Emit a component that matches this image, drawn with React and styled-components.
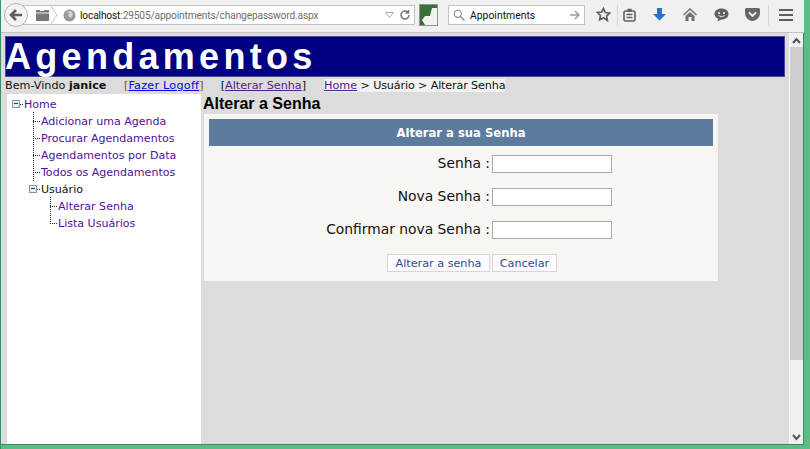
import React from "react";
import styled, { createGlobalStyle } from "styled-components";

const Global = createGlobalStyle`
  html, body { margin: 0; padding: 0; height: 449px; overflow: hidden; background: #5dbd8a; }
  #root { height: 449px; }
  * { box-sizing: border-box; }
`;

const Win = styled.div`
  width: 810px; height: 449px; display: flex; flex-direction: column;
  padding: 0 6px 4px 0; border-left: 1px solid #3a8f68; background: #5cbc88;
  font-family: "DejaVu Sans", Verdana, sans-serif;
`;
const Toolbar = styled.div`
  height: 33px; flex: none; display: flex; align-items: center;
  background: #f0f0f0; border-bottom: 1px solid #c4c4c4; padding-left: 3px;
`;
const Back = styled.div`
  width: 24px; height: 24px; border-radius: 50%; background: #f4f4f4; border: 1px solid #b4b4b4;
  display: flex; align-items: center; justify-content: center; flex: none;
  position: relative; z-index: 1; margin-top: -2px;
`;
const Url = styled.div`
  width: 393px; height: 20px; margin-left: -6px; margin-top: -2px; background: #fff; border: 1px solid #bcc4cc; border-left: none;
  display: flex; align-items: center; font: 10.2px "Roboto", sans-serif; letter-spacing: -0.15px; color: #6d6d6d; padding-left: 14px; flex: none;
`;
const Calendar = styled.svg` width: 13px; height: 12px; flex: none; margin-right: 2px; `;
const Chevron = styled.svg` width: 7px; height: 20px; flex: none; `;
const Globe = styled.svg` width: 13px; height: 13px; flex: none; margin-left: 5px; `;
const Host = styled.span` color: #111; `;
const UrlText = styled.span` flex: 1; margin-left: 4px; white-space: nowrap; `;
const Drop = styled.svg` width: 9px; height: 6px; flex: none; margin-right: 5px; `;
const Reload = styled.svg` width: 12px; height: 12px; flex: none; margin-right: 3px; `;
const Thumb = styled.div`
  width: 19px; height: 22px; margin-left: 4px; margin-top: -2px; flex: none; background: #3c6e3a;
  border: 1px solid #8a9a8a;
`;
const ThumbArt = styled.svg` width: 17px; height: 20px; display: block; `;
const Search = styled.div`
  width: 137px; height: 20px; margin-left: 10px; margin-top: -2px; flex: none; background: #fff; border: 1px solid #bcc4cc;
  display: flex; align-items: center; padding: 0 4px; font: 10.4px "Roboto", sans-serif; color: #111; gap: 5px;
`;
const SearchGlass = styled.svg` width: 12px; height: 12px; flex: none; `;
const SearchGo = styled.svg` width: 10px; height: 10px; flex: none; `;
const SearchText = styled.span` flex: 1; `;
const Icons = styled.div`
  display: flex; align-items: center; margin-left: 5px; margin-top: -3px; flex: 1;
`;
const IconSlot = styled.div`
  width: ${p => p.$w}px; height: 20px; display: flex; align-items: center; justify-content: center; flex: none;
  border-right: ${p => p.$sep ? "1px solid #d6d6d6" : "none"};
`;

const Content = styled.div`
  flex: 1; display: flex; min-height: 0; border-bottom: 1px solid #358f63; border-right: 1px solid #358f63;
`;
const Page = styled.div`
  flex: 1; background: #dcdcdc; display: flex; flex-direction: column; padding: 3px 3px 0 4px; min-width: 0; min-height: 0;
`;
const Banner = styled.div`
  height: 41px; flex: none; background: #000080; border: 1px solid #4a4aa0; color: #fff;
  font: bold 36px "Liberation Sans", Arial, sans-serif; letter-spacing: 4.3px; line-height: 40px; text-indent: -1px;
  white-space: nowrap; margin-right: 1px;
`;
const Nav = styled.div`
  height: 17px; flex: none; display: flex; align-items: center; font-size: 11.2px; color: #111; white-space: nowrap;
`;
const Welcome = styled.span` width: 119px; flex: none; `;
const Bracket = styled.span` color: ${p => p.$c || "#111"}; margin-right: ${p => p.$mr || 0}px; `;
const Link = styled.a`
  color: ${p => p.$visited ? "#551a8b" : "#0000ee"}; text-decoration: underline;
  letter-spacing: ${p => p.$ls || 0}px;
`;
const Crumb = styled.span` background: #f2f2f2; letter-spacing: -0.15px; `;
const Main = styled.div` flex: 1; display: flex; min-height: 0; `;
const Side = styled.div`
  width: 194px; flex: none; margin-left: 2px; background: #fff; padding: 2px 0 0 5px;
  font-size: 11.05px; color: #52109a;
`;
const Tree = styled.div` display: flex; flex-direction: column; `;
const TreeRow = styled.div`
  height: 17px; display: flex; align-items: center; white-space: nowrap; padding-left: ${p => 12 + p.$depth * 17}px;
`;
const TreeRoot = styled.div`
  height: 17px; display: flex; align-items: center; white-space: nowrap; padding-left: ${p => p.$indent || 0}px;
`;
const TreeChildren = styled.div`
  display: flex; flex-direction: column; position: relative;
  &::before {
    content: ""; position: absolute; left: ${p => p.$depth * 17 + 4}px; top: -1px; bottom: ${p => p.$last ? 8 : 0}px;
    border-left: 1px dotted #222;
  }
`;
const Dash = styled.span`
  width: 7px; flex: none; margin-left: -8px; margin-right: 1px; border-top: 1px dotted #222; height: 0;
`;
const Toggle = styled.span`
  width: 8px; height: 8px; flex: none; border: 1px solid #7b9ab8; background: #e6eef6; margin-top: -2px;
  display: flex; align-items: center; justify-content: center;
  &::after { content: ""; width: 4px; height: 1px; background: #1a3a5a; }
`;
const ToggleDash = styled.span` width: 3px; flex: none; border-top: 1px dotted #222; height: 0; margin-right: 1px; `;
const Plain = styled.span` color: #111; `;

const Body = styled.div` flex: 1; display: flex; flex-direction: column; padding-left: 2px; min-width: 0; `;
const Heading = styled.div`
  height: 20px; flex: none; font: bold 16px/20px "Liberation Sans", Arial, sans-serif; color: #000;
`;
const Panel = styled.div`
  width: 514px; margin-left: 1px; height: 167px; background: #f7f6f3; padding: 5px; flex: none;
  display: flex; flex-direction: column;
`;
const PanelHead = styled.div`
  height: 27px; flex: none; background: #5d7b9d; color: #fff; font-size: 11.6px; font-weight: bold;
  display: flex; align-items: center; justify-content: center;
`;
const FormRows = styled.div` display: flex; flex-direction: column; gap: 13px; margin-top: 8px; `;
const FormRow = styled.div` height: 20px; display: flex; align-items: center; `;
const Label = styled.label`
  width: 283px; flex: none; text-align: right; font-size: 13.85px; color: #111; white-space: nowrap; padding-right: 2px;
  margin-top: -2px;
`;
const Field = styled.input`
  width: 120px; height: 18px; margin: 0; border: 1px solid #a9a9b0; background: #fff; padding: 0; display: block; border-radius: 0; outline: none;
`;
const Buttons = styled.div` display: flex; gap: 2px; padding-left: 178px; margin-top: 14px; `;
const Btn = styled.button`
  height: 18px; padding: 0; width: ${p => p.$w}px; background: #fffbff; border: 1px solid #d6d4dc; color: #284e98;
  font: 11.2px "DejaVu Sans", Verdana, sans-serif; border-radius: 0;
`;
const Scrollbar = styled.div`
  width: 14px; flex: none; background: #f0f0f0; display: flex; flex-direction: column; border-left: 1px solid #f8f8f8;
`;
const Arrow = styled.div` height: 14px; display: flex; align-items: center; justify-content: center; flex: none; `;
const ThumbBar = styled.div` height: 313px; flex: none; background: #cdcdcd; `;
const Spacer = styled.div` flex: 1; `;

export default function App() {
  return (
    <Win>
      <Global />
      <Toolbar>
        <Back>
          <svg width="14" height="12" viewBox="0 0 14 12"><path d="M7 1 2 6l5 5M2.500 6H13" fill="none" stroke="#5e5e5e" strokeWidth="2.600" /></svg>
        </Back>
        <Url>
          <Calendar viewBox="0 0 13 12"><path d="M0 1h4v1h4V1h5v11H0z" fill="#777" /><path d="M0 4h13" stroke="#eee" /></Calendar>
          <Chevron viewBox="0 0 7 20"><path d="M0 1l6 9-6 9" fill="none" stroke="#c0c4c8" /></Chevron>
          <Globe viewBox="0 0 13 13"><circle cx="6.500" cy="6.500" r="6" fill="#9a9a9a" /><path d="M3 3l3 1-1 3 3 2 2-4-2-3z" fill="#d4d4d4" /></Globe>
          <UrlText><Host>localhost</Host>:29505/appointments/changepassword.aspx</UrlText>
          <Drop viewBox="0 0 9 6"><path d="M.5.5h8L4.500 5.500z" fill="none" stroke="#aaa" /></Drop>
          <Reload viewBox="0 0 12 12"><path d="M10 6a4 4 0 1 1-1.200-2.800M9.500 1v3h-3" fill="none" stroke="#777" strokeWidth="1.500" /></Reload>
        </Url>
        <Thumb>
          <ThumbArt viewBox="0 0 17 20"><path d="M17 3h-5l-2 8H5l-3 4 3 5h12z" fill="#f2f2f2" /></ThumbArt>
        </Thumb>
        <Search>
          <SearchGlass viewBox="0 0 12 12"><circle cx="4.800" cy="4.800" r="3.600" fill="none" stroke="#888" strokeWidth="1.100" /><path d="M7.500 7.500l4 4" stroke="#888" strokeWidth="1.400" /></SearchGlass>
          <SearchText>Appointments</SearchText>
          <SearchGo viewBox="0 0 10 10"><path d="M5 1l4 4-4 4M9 5H0" fill="none" stroke="#999" strokeWidth="1.400" /></SearchGo>
        </Search>
        <Icons>
          <IconSlot $w={28} $sep>
            <svg width="15" height="15" viewBox="0 0 24 24"><path d="M12 2.500l3 6.300 6.900.9-5 4.800 1.200 6.900L12 17.200l-6.100 3.300 1.200-6.900-5-4.800 6.900-.9z" fill="none" stroke="#5a5a5a" strokeWidth="2.600" /></svg>
          </IconSlot>
          <IconSlot $w={23}>
            <svg width="13" height="14" viewBox="0 0 13 14"><rect x="1" y="3" width="11" height="10" rx="1.500" fill="none" stroke="#5f5f5f" strokeWidth="1.600" /><path d="M5 1.500h3V3H5zM3.500 6.500h6M3.500 9.500h6" stroke="#5f5f5f" strokeWidth="1.300" fill="none" /></svg>
          </IconSlot>
          <IconSlot $w={36}>
            <svg width="13" height="13" viewBox="0 0 13 13"><path d="M4 0h5v6h4l-6.500 6.500L0 6h4z" fill="#1a78d8" /></svg>
          </IconSlot>
          <IconSlot $w={26}>
            <svg width="14" height="13" viewBox="0 0 14 13"><path d="M7 0l7 6.500-1 1L7 2 1 7.500l-1-1zM2.500 8L7 4l4.500 4v5H8.500V9h-3v4h-3z" fill="#707070" /></svg>
          </IconSlot>
          <IconSlot $w={36}>
            <svg width="15" height="14" viewBox="0 0 15 14"><path d="M7.500 0.500c4 0 7 2.300 7 5.500s-3 5.500-7 5.500l-4 2 .8-2.700C2 9.800.5 8 .5 6c0-3.200 3-5.500 7-5.500z" fill="#5f5f5f" /><circle cx="5" cy="5" r="1.100" fill="#f0f0f0" /><circle cx="10" cy="5" r="1.100" fill="#f0f0f0" /><path d="M4.500 7.500c1.500 1.300 4.500 1.300 6 0" stroke="#f0f0f0" fill="none" /></svg>
          </IconSlot>
          <IconSlot $w={26}>
            <svg width="15" height="13" viewBox="0 0 15 13"><path d="M1.500 0h12A1.500 1.500 0 0 1 15 1.500V5c0 4-3.500 8-7.500 8S0 9 0 5V1.500A1.500 1.500 0 0 1 1.500 0z" fill="#666" /><path d="M4 4.500l3.500 3.500L11 4.500" fill="none" stroke="#f0f0f0" strokeWidth="1.800" /></svg>
          </IconSlot>
          <IconSlot $w={4} $sep />
          <IconSlot $w={34}>
            <svg width="14" height="12" viewBox="0 0 14 12"><path d="M0 1h14M0 6h14M0 11h14" stroke="#5c5c5c" strokeWidth="2" /></svg>
          </IconSlot>
        </Icons>
      </Toolbar>
      <Content>
        <Page>
          <Banner>Agendamentos</Banner>
          <Nav>
            <Welcome>Bem-Vindo <b>janice</b></Welcome>
            <Bracket $c="#8a5a00">[</Bracket><Link href="#" $ls={0.25}>Fazer Logoff</Link><Bracket $c="#8a5a00" $mr={17}>]</Bracket>
            <Bracket>[</Bracket><Link href="#" $visited>Alterar Senha</Link><Bracket $mr={18}>]</Bracket>
            <Crumb><Link href="#" $visited>Home</Link> &gt; Usuário &gt; Alterar Senha</Crumb>
          </Nav>
          <Main>
            <Side>
              <Tree>
                <TreeRoot><Toggle /><ToggleDash />Home</TreeRoot>
                <TreeChildren $depth={1}>
                  <TreeRow $depth={1}><Dash />Adicionar uma Agenda</TreeRow>
                  <TreeRow $depth={1}><Dash />Procurar Agendamentos</TreeRow>
                  <TreeRow $depth={1}><Dash />Agendamentos por Data</TreeRow>
                  <TreeRow $depth={1}><Dash />Todos os Agendamentos</TreeRow>
                </TreeChildren>
                <TreeRoot $indent={17}><Toggle /><ToggleDash /><Plain>Usuário</Plain></TreeRoot>
                <TreeChildren $depth={2} $last>
                  <TreeRow $depth={2}><Dash />Alterar Senha</TreeRow>
                  <TreeRow $depth={2}><Dash />Lista Usuários</TreeRow>
                </TreeChildren>
              </Tree>
            </Side>
            <Body>
              <Heading>Alterar a Senha</Heading>
              <Panel>
                <PanelHead>Alterar a sua Senha</PanelHead>
                <FormRows>
                  <FormRow><Label>Senha :</Label><Field type="password" /></FormRow>
                  <FormRow><Label>Nova Senha :</Label><Field type="password" /></FormRow>
                  <FormRow><Label>Confirmar nova Senha :</Label><Field type="password" /></FormRow>
                </FormRows>
                <Buttons>
                  <Btn $w={103}>Alterar a senha</Btn>
                  <Btn $w={65}>Cancelar</Btn>
                </Buttons>
              </Panel>
            </Body>
          </Main>
        </Page>
        <Scrollbar>
          <Arrow><svg width="9" height="7" viewBox="0 0 9 7"><path d="M1 6l3.500-4L8 6" fill="none" stroke="#555" strokeWidth="2" /></svg></Arrow>
          <ThumbBar />
          <Spacer />
          <Arrow><svg width="9" height="7" viewBox="0 0 9 7"><path d="M1 1l3.500 4L8 1" fill="none" stroke="#555" strokeWidth="2" /></svg></Arrow>
        </Scrollbar>
      </Content>
    </Win>
  );
}
